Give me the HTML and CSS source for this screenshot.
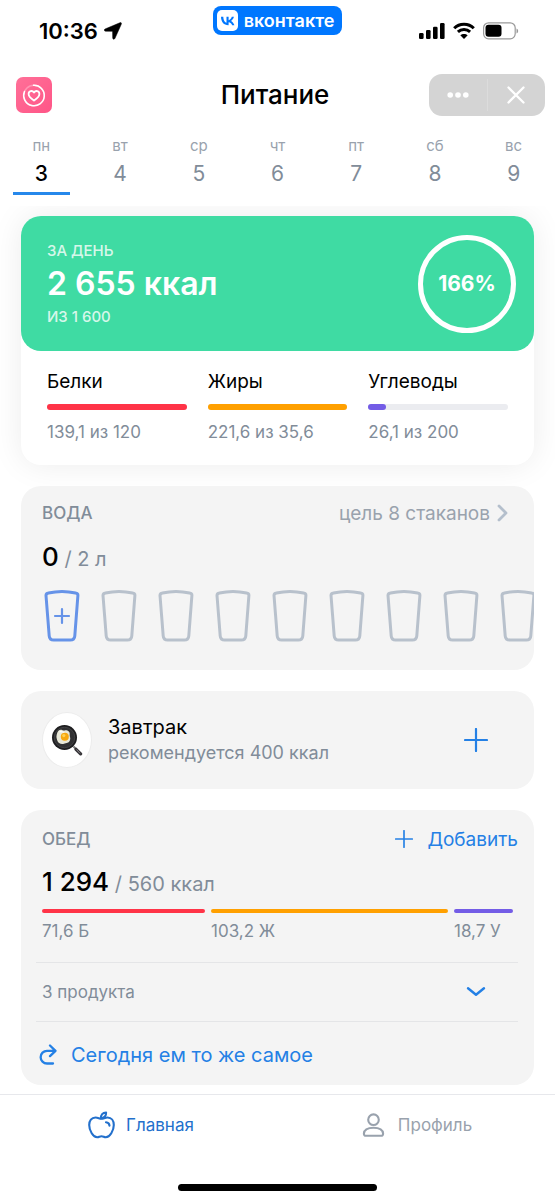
FILE: index.html
```html
<!DOCTYPE html>
<html lang="ru">
<head>
<meta charset="utf-8">
<meta name="viewport" content="width=device-width, initial-scale=1">
<title>Питание</title>
<link rel="stylesheet" href="styles.css">
</head>
<body>
<svg class="defs" width="0" height="0" aria-hidden="true">
  <symbol id="cup" viewBox="0 0 38 54"><path d="M3 6.500C3 5.200 3.900 4.300 5.400 4 13.500 2.100 24.500 2.100 32.600 4c1.500.3 2.400 1.200 2.300 2.500l-3.100 40.300c-.2 2.900-1.900 4.200-4.600 4.200H10.800c-2.700 0-4.400-1.300-4.600-4.200z" fill="none" stroke="currentColor" stroke-width="3"/></symbol>
  <symbol id="plus" viewBox="0 0 24 24"><path d="M12 1v22M1 12h22" fill="none" stroke="currentColor" stroke-width="2.200" stroke-linecap="round"/></symbol>
</svg>
<div class="app">
  <div class="status">
    <div class="status-time">
      <span>10:36</span>
      <svg width="18" height="18" viewBox="0 0 18 18"><path d="M15.800.8C17 .2 17.800 1 17.300 2.200L11 16.300c-.6 1.300-2.300 1-2.300-.4l-.1-6c0-.4-.2-.6-.6-.6L1.500 9.200C.1 9.200-.2 7.600 1 7z" fill="#000" stroke="#000" stroke-width=".5"/></svg>
    </div>
    <a class="vk" href="#">
      <svg width="21" height="21" viewBox="0 0 21 21"><rect width="21" height="21" rx="5" fill="#fff"/><path d="M11.300 15.200C6.800 15.200 4.100 12.100 4 6.800h2.300c.1 3.900 1.800 5.600 3.200 5.900V6.800h2.100v3.400c1.300-.2 2.700-1.700 3.200-3.400h2.100c-.4 2-1.800 3.500-2.900 4.100 1.100.5 2.700 1.800 3.400 4.300h-2.300c-.5-1.600-1.800-2.700-3.500-2.900v2.900z" fill="#07f"/></svg>
      <span>вконтакте</span>
    </a>
    <div class="status-icons">
      <svg width="26" height="18" viewBox="0 0 26 18"><rect x="0" y="11" width="4.600" height="6" rx="1.300"/><rect x="7" y="8" width="4.600" height="9" rx="1.300"/><rect x="14" y="4.800" width="4.600" height="12.200" rx="1.300"/><rect x="21" y="1" width="4.600" height="16" rx="1.300"/></svg>
      <svg width="22" height="18" viewBox="0 0 22 18"><path d="M1.200 6.300C6.500.9 15.500.9 20.800 6.300M4.900 9.900c3.400-3.200 8.800-3.200 12.200 0" fill="none" stroke="#000" stroke-width="3"/><path d="M11 17l-3.700-3.700c2.100-1.900 5.300-1.900 7.400 0z"/></svg>
      <svg width="36" height="18" viewBox="0 0 36 18"><rect x=".6" y=".8" width="31.600" height="16" rx="5" fill="none" stroke="#999" stroke-width="1.200"/><rect x="2.500" y="2.800" width="16" height="12" rx="3"/><path d="M33.500 6.500c2.200.8 2.200 4.200 0 5z" fill="#999"/></svg>
    </div>
  </div>

  <header class="header">
    <svg class="app-icon" width="36" height="36" viewBox="0 0 36 36"><defs><linearGradient id="pink" x1="0" y1="0" x2="1" y2="1"><stop offset="0" stop-color="#ff7098"/><stop offset="1" stop-color="#ff5587"/></linearGradient></defs><rect width="36" height="36" rx="7" fill="url(#pink)"/><circle cx="18" cy="18.500" r="10.300" fill="none" stroke="#fff" stroke-opacity=".3" stroke-width="1.500"/><path d="M17.500 8.200A10.300 10.300 0 1 1 8.500 14.500" fill="none" stroke="#fff" stroke-width="1.500" stroke-linecap="round"/><path d="M18 23.500c-1.500-1-5.400-3.500-5.400-6.500 0-3.200 3.800-4 5.400-1.400 1.600-2.600 5.400-1.800 5.400 1.400 0 3-3.900 5.500-5.400 6.500z" fill="none" stroke="#fff" stroke-width="1.800" stroke-linejoin="round"/></svg>
    <h1 class="title">Питание</h1>
    <div class="controls">
      <button class="control" aria-label="Ещё"><svg width="22" height="6" viewBox="0 0 22 6" fill="#fff"><circle cx="3.200" cy="3" r="2.800"/><circle cx="11" cy="3" r="2.800"/><circle cx="18.800" cy="3" r="2.800"/></svg></button>
      <button class="control" aria-label="Закрыть"><svg width="18" height="18" viewBox="0 0 18 18"><path d="M1.500 1.500l15 15M16.500 1.500l-15 15" stroke="#fff" stroke-width="2.300" stroke-linecap="round"/></svg></button>
    </div>
  </header>

  <nav class="days" aria-label="Дни недели">
    <button class="day day-active"><span class="day-name">пн</span><span class="day-num">3</span></button>
    <button class="day"><span class="day-name">вт</span><span class="day-num">4</span></button>
    <button class="day"><span class="day-name">ср</span><span class="day-num">5</span></button>
    <button class="day"><span class="day-name">чт</span><span class="day-num">6</span></button>
    <button class="day"><span class="day-name">пт</span><span class="day-num">7</span></button>
    <button class="day"><span class="day-name">сб</span><span class="day-num">8</span></button>
    <button class="day"><span class="day-name">вс</span><span class="day-num">9</span></button>
  </nav>

  <main class="feed">
    <section class="summary">
      <div class="total">
        <div>
          <div class="total-caption">ЗА ДЕНЬ</div>
          <div class="total-value">2 655 ккал</div>
          <div class="total-caption">ИЗ 1 600</div>
        </div>
        <div class="ring">166%</div>
      </div>
      <div class="macros">
        <div><div class="macro-name">Белки</div><div class="track"><div class="fill red" style="width:100%"></div></div><div class="macro-value">139,1 из 120</div></div>
        <div><div class="macro-name">Жиры</div><div class="track"><div class="fill orange" style="width:100%"></div></div><div class="macro-value">221,6 из 35,6</div></div>
        <div><div class="macro-name">Углеводы</div><div class="track"><div class="fill violet" style="width:13%"></div></div><div class="macro-value">26,1 из 200</div></div>
      </div>
    </section>

    <section class="card water">
      <div class="card-head">
        <h2 class="card-title">ВОДА</h2>
        <a class="goal" href="#">цель 8 стаканов<svg width="11" height="18" viewBox="0 0 11 18"><path d="M2 2l7 7-7 7" fill="none" stroke="#b4bfcc" stroke-width="2.800" stroke-linecap="round" stroke-linejoin="round"/></svg></a>
      </div>
      <div class="amount"><b>0</b> / 2 л</div>
      <div class="cups">
        <button class="cup cup-next" aria-label="Добавить стакан"><svg width="38" height="54" viewBox="0 0 38 54"><use href="#cup"/><path d="M19 20v14M12 27h14" stroke="currentColor" stroke-width="2.200" stroke-linecap="round"/></svg></button>
        <button class="cup" aria-label="Стакан 2"><svg width="38" height="54"><use href="#cup"/></svg></button>
        <button class="cup" aria-label="Стакан 3"><svg width="38" height="54"><use href="#cup"/></svg></button>
        <button class="cup" aria-label="Стакан 4"><svg width="38" height="54"><use href="#cup"/></svg></button>
        <button class="cup" aria-label="Стакан 5"><svg width="38" height="54"><use href="#cup"/></svg></button>
        <button class="cup" aria-label="Стакан 6"><svg width="38" height="54"><use href="#cup"/></svg></button>
        <button class="cup" aria-label="Стакан 7"><svg width="38" height="54"><use href="#cup"/></svg></button>
        <button class="cup" aria-label="Стакан 8"><svg width="38" height="54"><use href="#cup"/></svg></button>
        <button class="cup" aria-label="Стакан 9"><svg width="38" height="54"><use href="#cup"/></svg></button>
      </div>
    </section>

    <section class="card meal">
      <div class="meal-icon"><svg width="32" height="32" viewBox="0 0 32 32"><path d="M22.500 22.500l3 3" stroke="#777" stroke-width="2"/><path d="M25 25.300l4.600 4.600" stroke="#353337" stroke-width="3.200" stroke-linecap="round"/><path d="M25.500 25.500l3.500 3.800" stroke="#99969b" stroke-width=".8"/><circle cx="13.500" cy="13.500" r="12.500" fill="#1d1d1f"/><circle cx="13.500" cy="13.500" r="10.300" fill="#303032" stroke="#48484a" stroke-width=".8"/><path d="M8 6.200c2-1.500 3.800.5 5.800.2 3-.4 5.400 1.400 4.900 4.200-.3 2 1.300 3.300.2 6-1 2.600-3.500 2.300-5.900 3.200-3 .9-6-.6-6.700-3.200-.4-2-1.200-3.200-.7-5.400.3-1.700 1-3.800 2.400-5z" fill="#e8e8d8"/><path d="M8.500 8c1.500-1 3.500.5 5 .4" fill="none" stroke="#fff" stroke-width="1.200"/><circle cx="13.800" cy="12.800" r="4" fill="#f7a80f"/><circle cx="12.800" cy="11.600" r="1.600" fill="#ffd152"/></svg></div>
      <div class="meal-text"><h2 class="meal-name">Завтрак</h2><p class="meal-hint">рекомендуется 400 ккал</p></div>
      <button class="plain" aria-label="Добавить завтрак"><svg width="24" height="24"><use href="#plus"/></svg></button>
    </section>

    <section class="card lunch">
      <div class="card-head">
        <h2 class="card-title">ОБЕД</h2>
        <button class="plain add"><svg width="18" height="18"><use href="#plus"/></svg>Добавить</button>
      </div>
      <div class="amount"><b>1 294</b> / 560 ккал</div>
      <div class="split">
        <div><div class="bar red"></div>71,6 Б</div>
        <div><div class="bar orange"></div>103,2 Ж</div>
        <div><div class="bar violet"></div>18,7 У</div>
      </div>
      <button class="plain row products">3 продукта<svg width="20" height="12" viewBox="0 0 20 12"><path d="M2 2.200l8 6.600 8-6.600" fill="none" stroke="#2480e5" stroke-width="2.400" stroke-linecap="round" stroke-linejoin="round"/></svg></button>
      <button class="plain row repeat"><svg width="20" height="22" viewBox="0 0 20 22"><path d="M11 1.500l5.500 5.300-5.500 5.300M16 6.800H8A6.300 6.300 0 0 0 8 19.500h6" fill="none" stroke="currentColor" stroke-width="2.300" stroke-linecap="round" stroke-linejoin="round"/></svg>Сегодня ем то же самое</button>
    </section>
  </main>

  <footer class="tabbar">
    <nav class="tabs">
      <a class="tab tab-active" href="#"><svg width="27" height="28" viewBox="0 0 27 28"><g fill="none" stroke="currentColor" stroke-width="2.100" stroke-linecap="round" stroke-linejoin="round"><path d="M13.500 7.800c2.300-.2 3.500-1.300 6-1.300 4 0 6.300 3.300 6.300 7.500 0 5.600-4 12.300-8 12.300-1.800 0-2.500-1-4.300-1s-2.500 1-4.300 1c-4 0-8-6.700-8-12.300 0-4.200 2.300-7.500 6.300-7.500 2.500 0 3.700 1.100 6 1.300z"/><path d="M13 7.300c-.3-3.600 1.600-5.600 5.100-5.800.1 3.400-1.700 5.400-5.100 5.800z"/><path d="M18 11.300c2 .2 3.300 1.300 3.500 3.400"/></g></svg>Главная</a>
      <a class="tab" href="#"><svg width="23" height="26" viewBox="0 0 23 26"><g fill="none" stroke="currentColor" stroke-width="2.100"><circle cx="11.500" cy="7.700" r="5.300"/><path d="M4 23.800c-1.400 0-2.200-.9-2.100-2.200C2.200 17.600 6 15.800 11.500 15.800s9.300 1.800 9.600 5.800c.1 1.300-.7 2.200-2.100 2.200z"/></g></svg>Профиль</a>
    </nav>
    <div class="home-indicator"></div>
  </footer>
</div>
</body>
</html>
```
FILE: styles.css
```css
* { box-sizing: border-box; }
body { margin: 0; background: #fff; color: #000; font-family: Inter, "Liberation Sans", sans-serif; }
h1, h2, p { margin: 0; font-weight: 400; }
a { color: inherit; text-decoration: none; }
button { margin: 0; padding: 0; border: 0; background: none; color: inherit; font: inherit; cursor: pointer; }
svg { display: block; flex: none; }
.defs { position: absolute; }
.app { display: flex; flex-direction: column; min-height: 100vh; }

.status { display: grid; grid-template-columns: 1fr auto 1fr; align-items: center; height: 62px; padding: 0 36px; }
.status-time { display: flex; align-items: center; gap: 6px; padding-left: 3px; font-size: 22px; font-weight: 600; }
.status-icons { display: flex; align-items: center; justify-content: flex-end; gap: 8px; }
.vk { display: flex; align-items: center; gap: 6px; align-self: start; height: 29px; margin-top: 6px; padding: 0 8px 0 4px; border-radius: 8px; background: #07f; color: #fff; font-size: 18px; font-weight: 600; line-height: 27px; }

.header { display: grid; grid-template-columns: 1fr auto 1fr; align-items: center; height: 66px; padding: 0 10px 0 5px; }
.app-icon { margin-left: 11px; }
.title { font-size: 26px; font-weight: 500; line-height: 32px; }
.controls { display: flex; justify-self: end; width: 116px; height: 42px; padding: 5px 0; border-radius: 13px; background: #d4d4d4; }
.control { flex: 1; display: flex; align-items: center; justify-content: center; }
.control + .control { border-left: 1px solid #dcdcdc; }

.days { display: grid; grid-template-columns: repeat(7, 1fr); padding: 6px 2px 0; }
.day { display: flex; flex-direction: column; align-items: center; margin: 0 11px; padding-top: 2px; border-bottom: 3px solid transparent; color: #818c99; }
.day-name { color: #99a2ad; font-size: 15px; line-height: 20px; }
.day-num { font-size: 21px; line-height: 36px; height: 36px; }
.day-active { border-color: #2688eb; color: #000; }
.day-active .day-num { font-weight: 500; }

.feed { display: flex; flex-direction: column; gap: 21px; margin-top: 11px; padding: 10px 21px 9px; overflow: hidden; }
.summary { border-radius: 20px; box-shadow: 0 0 32px rgba(0, 0, 0, .08); background: #fff; }
.total { display: flex; align-items: center; justify-content: space-between; height: 135px; padding: 0 18px 0 26px; border-radius: 20px; background: #3fdba3; color: #fff; }
.total-caption { color: rgba(255, 255, 255, .8); font-size: 15px; font-weight: 500; line-height: 20px; }
.total-value { font-size: 32px; font-weight: 600; line-height: 46px; }
.ring { display: flex; align-items: center; justify-content: center; width: 98px; height: 98px; border: 5px solid #fff; border-radius: 50%; font-size: 21px; font-weight: 700; }
.macros { display: grid; grid-template-columns: repeat(3, 1fr); gap: 21px; padding: 19px 26px 21px; }
.macro-name { font-size: 19px; line-height: 24px; }
.macro-value { color: #818c99; font-size: 17px; line-height: 24px; }
.track { height: 6px; margin: 10px 0; border-radius: 3px; background: #ebecf0; }
.fill { height: 100%; border-radius: 3px; }
.red { background: #ff3347; }
.orange { background: #ffa000; }
.violet { background: #735ce6; }

.card { border-radius: 20px; background: #f4f4f4; overflow: hidden; }
.card-head { display: flex; align-items: center; justify-content: space-between; height: 24px; }
.card-title { color: #818c99; font-size: 17px; font-weight: 500; line-height: 24px; }
.amount { height: 32px; color: #818c99; font-size: 20px; line-height: 32px; }
.amount b { color: #000; font-size: 26px; font-weight: 500; line-height: 1; }

.water { padding: 15px 0 27px 21px; }
.water .amount { margin: 18px 0 14px; }
.goal { display: flex; align-items: center; gap: 7px; margin-right: 26px; color: #99a2ad; font-size: 19px; }
.cups { display: flex; gap: 19px; padding-left: 1px; overflow: hidden; }
.cup { flex: none; color: #b8c1cc; }
.cup-next { color: #6693e8; }

.meal { display: flex; align-items: center; gap: 16px; height: 98px; padding: 0 46px 0 21px; }
.meal-icon { display: flex; align-items: center; justify-content: center; width: 50px; height: 56px; border: 1px solid #ececec; border-radius: 50%; background: #fff; }
.meal-text { flex: 1; line-height: 26px; }
.meal-name { font-size: 20px; }
.meal-hint { color: #818c99; font-size: 18px; }
.plain { display: flex; align-items: center; color: #2480e5; }

.lunch { padding: 17px 16px 0 15px; }
.lunch .card-head, .lunch .amount { padding-left: 6px; }
.lunch .amount { margin: 17px 0 9px; }
.add { gap: 14px; font-size: 19px; }
.split { display: grid; grid-template-columns: 163fr 237fr 59fr; gap: 6px; padding: 0 5px 20px 6px; color: #818c99; font-size: 17px; line-height: 22px; white-space: nowrap; }
.bar { height: 4px; margin-bottom: 7px; border-radius: 2px; }
.row { width: 100%; border-top: 1px solid #e4e5e7; }
.products { justify-content: space-between; height: 59px; padding: 0 32px 0 6px; color: #818c99; font-size: 17px; }
.repeat { gap: 12px; height: 64px; padding: 2px 0 0 3px; font-size: 20px; }

.tabbar { display: flex; flex-direction: column; justify-content: space-between; height: 107px; margin-top: auto; padding: 14px 0 10px; border-top: 1px solid #e7e8ec; background: #fff; }
.tabs { display: grid; grid-template-columns: 1fr 1fr; padding-left: 3px; }
.tab { display: flex; align-items: center; justify-content: center; gap: 13px; height: 32px; color: #99a2ad; font-size: 17px; }
.tab-active { gap: 11px; color: #2370cc; }
.home-indicator { width: 36%; height: 7px; margin: 0 auto; border-radius: 4px; background: #000; }
```
